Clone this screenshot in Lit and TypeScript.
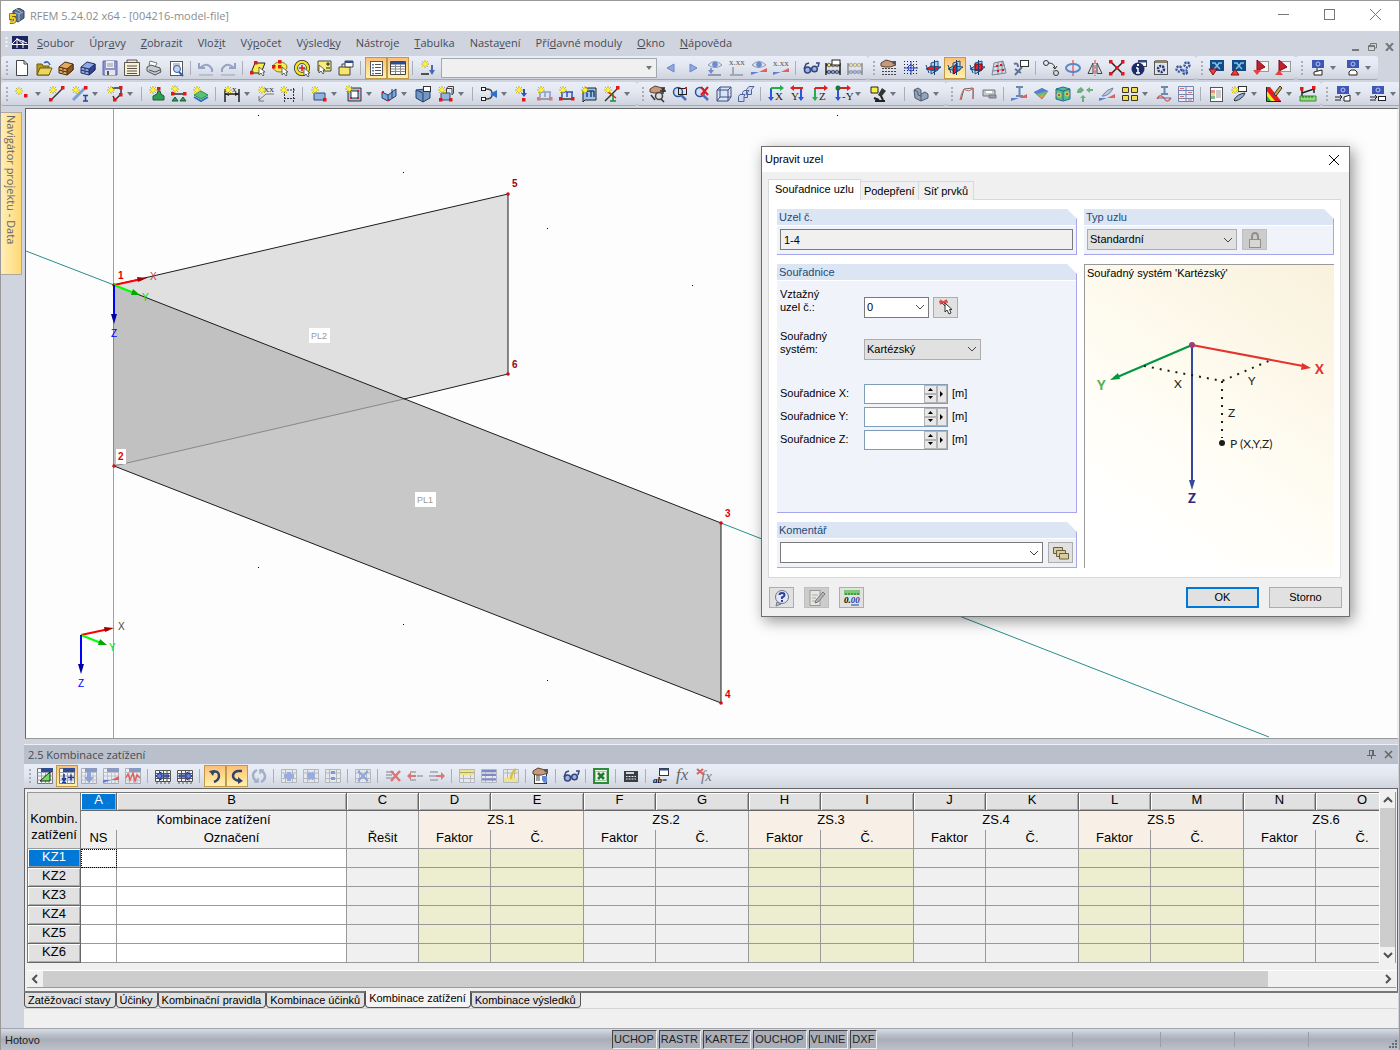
import { LitElement, html, svg, css, nothing } from "lit";
import { customElement, property } from "lit/decorators.js";
import { classMap } from "lit/directives/class-map.js";

/* ---------- shared drawing fragments ---------- */
const star = (x = 4, y = 4) => svg`<g transform="translate(${x} ${y})"><path d="M0-4V4M-4 0H4M-3-3L3 3M3-3L-3 3" stroke="#c9b400" fill="none"/><circle r="2" fill="#fff23c"/></g>`;
const dot = (x: number, y: number, c = "#e01818") => svg`<rect x=${x} y=${y} width="3.500" height="3.500" fill=${c}/>`;
const node = (x: number, y: number) => svg`<rect x=${x} y=${y} width="2" height="2" fill="#e01818"/>`;
const ring = (x: number, y: number, r: number, c: string) => svg`<circle cx=${x} cy=${y} r=${r} fill="none" stroke=${c}/>`;
const line = (d: string, c = "#222", w = 1) => svg`<path d=${d} stroke=${c} stroke-width=${w} fill="none"/>`;
const fill = (d: string, c: string, s = "none") => svg`<path d=${d} fill=${c} stroke=${s}/>`;
const cursor = (x = 8, y = 7) => svg`<path transform="translate(${x} ${y})" d="M0 0V8L2 6L4 9L5 8L4 5H6Z" fill="#fff" stroke="#444" stroke-width=".8"/>`;
const glyph = (t: string, x: number, y: number, s: number, c = "#222") => svg`<text x=${x} y=${y} font-size=${s} fill=${c} font-family="Liberation Serif, serif">${t}</text>`;
const gridBox = (o = 1) => svg`<g opacity=${o}><path d="M.5 .5H15.5V15.5H.5Z" fill="#f4f5f7" stroke="#777"/><path d="M.5 4.500H15.500M.5 8H15.500M.5 12H15.500M4.500 4V15.500M8.500 4V15.500M12 4V15.500" stroke="#9aa0aa" fill="none"/><path d="M4 0H16V4H4Z" fill="#2f4c92"/></g>`;
const plainGrid = () => svg`<path d="M.5 2.500H15.500V13.500H.5ZM4.500 2V14M8.500 2V14M12 2V14M1 5.500H15M1 10.500H15" fill="#f4f5f7" stroke="#555"/><path d="M2 14V16M6 14V16M10 14V16M14 14V16" stroke="#555"/>`;
const paleGrid = () => svg`<path d="M.5 1.500H15.500V14.500H.5ZM4.500 1V15M11.500 1V15M1 5H15M1 10.500H15" fill="#e6e8ec" stroke="#b3b7be"/>`;
const cabinet = (a: string, b: string, c: string) => svg`${fill("M1 7L7 2L15 4V10L9 15L1 13Z", a, c)}${fill("M9 9L15 4V10L9 15Z", b, c)}${line("M1 7L9 9M1 10L9 12M4 9H6M4 12H6", c)}`;
const planes = (f: string) => svg`${fill("M6 3L13 1V10L6 14Z", "#a9d4f0", "#16518d")}${fill("M1 9L6 6L16 7L10 11Z", f === "a" ? "#e02020" : "#7cb8e6", "#16518d")}${f === "c" ? fill("M6 4H13V10H6Z", "#ee1c24", "#8a0000") : nothing}${f === "b" ? fill("M6 8L10 3V11L7 14Z", "#e02020", "#7a0000") : nothing}${line("M9.500 0V15M1 5L4 13", "#173f72")}`;
const lens = (x: number, y: number) => svg`<circle cx=${x} cy=${y} r="4.500" fill="#cfe0fa" stroke="#2d4f9c" stroke-width="1.500"/>${line(`M${x + 3} ${y + 3}L${x + 8} ${y + 8}`, "#4c6fc0", 2.5)}`;
const monitor = () => svg`<rect x="2" y="0" width="12" height="8" fill="#3f57b4"/><circle cx="8" cy="4" r="2" fill="none" stroke="#b9c6f0"/>`;
const screen = () => svg`<rect x="1" y="0" width="14" height="11" fill="#134b86"/>${line("M3 3H6L8 6L10 3H13M8 6L5 9M8 6L11 9", "#7fc3ea", 1.5)}`;
const glasses = () => svg`${line("M1 9L3 4L6 3M15 7L16 3L13 3M7 9Q8 8 9 9", "#34457c", 1.5)}<circle cx="4.500" cy="10" r="3" fill="#9db4e8" stroke="#34457c" stroke-width="1.500"/><circle cx="11.500" cy="9" r="2.800" fill="#9db4e8" stroke="#34457c" stroke-width="1.500"/>`;
const abacus = (c: string) => svg`${line("M1 3V15M15 3V15M1 5H15M1 12H15", c, 1.5)}<g fill="#f3df6c" stroke=${c} stroke-width=".6"><circle cx="4" cy="5" r="1.800"/><circle cx="8" cy="5" r="1.800"/><circle cx="12" cy="5" r="1.800"/></g><g fill="#7f9be0" stroke=${c} stroke-width=".6"><circle cx="4" cy="12" r="1.800"/><circle cx="8" cy="12" r="1.800"/><circle cx="12" cy="12" r="1.800"/></g>`;
const hand = () => svg`${fill("M0 3L5 0L12 2L15 5L9 7L4 7L0 6Z", "#c49a78", "#5c4030")}${fill("M10 1L15 1V5L12 4Z", "#555")}`;
const eye = (y = 0) => svg`<g transform="translate(0 ${y})"><path d="M1 5Q8-2 15 5Q8 10 1 5Z" fill="#dfe7f7" stroke="#8d96ab"/><circle cx="8" cy="4.500" r="2.800" fill="#6c8ccf"/></g>`;
const wedge = () => svg`${fill("M0 15V12L8 12Z", "#5d7fd8")}${fill("M8 12L16 8V12Z", "#e06060")}`;
const axes = (t: string, h: string, v: string, flip = false) => svg`${line(flip ? "M13 2H2M11 2V14" : "M3 2H14M3 2V14", h, 2)}${flip ? fill("M4-1V5L0 2Z", h) : fill("M12-1V5L16 2Z", h)}${line(flip ? "M11 3V12" : "M3 3V12", v, 2)}${flip ? fill("M8 11H14L11 15Z", v) : fill("M0 11H6L3 15Z", v)}${glyph(t, flip ? 1 : 7, 14, 11)}`;
const doc = () => svg`<rect x="2.500" y="1.500" width="12" height="14" fill="#fff" stroke="#555"/>`;
const load = (o: number) => svg`<g opacity=${o}>${line("M1 13H15", "#333", 1.5)}${line("M3 6H14M3 6V11M8 6V11M13 6V11", "#2a55bb", 1.5)}${dot(0, 11)}${dot(12, 11)}</g>${star(4, 4)}`;
const redPlane = (up: boolean) => svg`<rect x="5.500" y="1.500" width="10" height="10" fill="#f4f4f4" stroke="#999"/>${fill("M4 0L12 7L4 11Z", "#c32030", "#7a0c18")}${up ? fill("M0 15H8L4 10Z", "#e84040") : fill("M0 10H8L4 15Z", "#e84040")}`;

const ICONS: Record<string, unknown> = {
  new: svg`${fill("M2.500 .5H10L13.500 4V15.500H2.500Z", "#fff", "#444")}${line("M10 .5V4H13.500", "#444")}`,
  open: svg`${fill("M1 4H6L7 6H13V15H1Z", "#b99a1c", "#6b5a10")}${fill("M1 15L4 8H16L13 15Z", "#ecd65e", "#6b5a10")}${line("M8 3Q12 0 14 5", "#3a62b8", 1.5)}`,
  project: cabinet("#e6a85a", "#8a5a24", "#4a2c10"),
  library: cabinet("#8fa8e6", "#32458c", "#1f2e66"),
  save: svg`${fill("M1 1H15V15H1Z", "#8d93cc", "#666aa6")}<rect x="4" y="1" width="8" height="7" fill="#eee"/>${line("M5 4H11M5 6H11", "#999")}<rect x="3" y="10" width="10" height="5" fill="#e4e6ee"/><rect x="5" y="11" width="2" height="4" fill="#555"/>`,
  header: svg`${fill("M.5 2.500H15.500V15.500H.5Z", "#f7f1dc", "#5d5346")}${line("M3 2V0H13V2M3 6H13M3 8.500H13M3 11H13M3 13.500H13", "#5d5346")}`,
  print: svg`${fill("M4 1L11 3L9 7L3 5Z", "#fff", "#777")}${fill("M1 7L5 5L14 8L15 12L9 15L1 11Z", "#c6cad4", "#555")}${line("M3 10L9 12L14 10", "#555")}`,
  preview: svg`${doc()}${line("M5 4H12M5 6H12M5 8H9", "#888")}<circle cx="9" cy="9" r="3.500" fill="#bdd4f5" stroke="#3a5ca8"/>${line("M11 12L15 16", "#3a5ca8", 2)}`,
  undo: svg`${line("M1 3V8H7M2 8Q9 1 14 9V12", "#93a2c6", 2)}${line("M1 15H15", "#9aa3b5")}`,
  redo: svg`${line("M15 3V8H9M14 8Q7 1 2 9V12", "#93a2c6", 2)}${line("M1 15H15", "#9aa3b5")}`,
  selPoly: svg`${fill("M1 13L5 3H15L11 13Z", "#f7ee4e", "#222")}${dot(4, 1)}${dot(0, 11)}${cursor(9, 7)}`,
  selOval: svg`<ellipse cx="8" cy="7" rx="7" ry="5" fill="#f7ee4e" stroke="#8a7c10"/>${dot(6, 0)}${dot(6, 5)}${dot(0, 5)}${cursor(10, 7)}`,
  selRing: svg`<circle cx="8" cy="8" r="6" fill="none" stroke="#222" stroke-width="4"/><circle cx="8" cy="8" r="6" fill="none" stroke="#f4e61e" stroke-width="2.500"/>${line("M8 5V11M5 8H11", "#e01818", 1.5)}${cursor(10, 8)}`,
  selMore: svg`${fill("M2 1H15V11H2Z", "#f7ee7a", "#444")}${line("M10 4H14M12 2V6M10 8H14", "#222")}${cursor(3, 5)}`,
  selWin: svg`${fill("M1 7H12V15H1Z", "#f7e66a", "#444")}${fill("M7 1H15V7H7Z", "#fff", "#444")}${line("M7 2H15", "#2f4c92", 2)}${line("M4 7V4H7", "#444")}`,
  tree: svg`${doc()}${line("M7 4.500H13M7 7.500H13M7 10.500H13M7 13.500H13", "#555")}<path d="M5 4V15" stroke="#2f4c92" stroke-width="1.500" stroke-dasharray="1.500 1.500"/>`,
  table: svg`${fill("M.5 1.500H15.500V14.500H.5Z", "#fff", "#444")}${line("M1 3H15", "#2f4c92", 3)}${line("M1 6.500H15M1 9H15M1 11.500H15M5.500 4V14M10.500 4V14", "#888")}`,
  newLoad: svg`${star(5, 4)}${line("M1 14H9", "#222", 1.5)}${line("M12 5V11", "#4a68b4", 2)}${fill("M9 10H15L12 15Z", "#4a68b4")}`,
  prev: fill("M11 4V12L4 8Z", "#8ea8e8", "#6f86c4"),
  next: fill("M5 4V12L12 8Z", "#8ea8e8", "#6f86c4"),
  eyeDown: svg`${eye()}${line("M4 8V13M1 15H14", "#7c8698", 1.5)}${fill("M1 10H7L4 14Z", "#6c8ccf")}`,
  xxDown: svg`${glyph("x.xx", 0, 5, 9, "#555")}${line("M4 7V14M1 15H14", "#9098a8", 1.5)}`,
  eyeRed: svg`${eye()}${wedge()}`,
  xxRed: svg`${glyph("x.xx", 0, 6, 9, "#555")}${wedge()}`,
  glasses: glasses(),
  abacusWin: svg`${abacus("#222")}<rect x="7" y="0" width="8" height="5" fill="#fff" stroke="#222"/>`,
  abacus: svg`<g opacity=".6">${abacus("#555")}</g>`,
  handGrid: svg`<path d="M1 8.500H16M1 11.500H16M1 14.500H16" stroke="#444" stroke-dasharray="2 1" fill="none"/>${hand()}`,
  gridPoint: svg`<g fill="none" stroke="#223" stroke-dasharray="1 2"><path d="M1 1.500H15M1 4.500H15M1 7.500H15M1 10.500H15M1 13.500H15"/></g>${ring(8, 8, 3, "#2a44c8")}${line("M8 1V15M1 8H15", "#2a44c8")}`,
  planeA: planes("a"), planeB: planes("b"), planeC: planes("c"),
  meshBox: svg`${fill("M3 3L12 1L15 13L1 15Z", "#d4dbe6", "#7c8698")}${line("M7 2V15M11 1V14M2 7L14 5M2 11L15 9", "#7c8698")}${node(5, 5)}${node(9, 4)}${node(6, 10)}${node(11, 9)}`,
  wrench: svg`${line("M2 15L9 7M2 9L8 13M1 4Q5 2 5 7", "#5f7396", 2)}<rect x="7.500" y=".5" width="8" height="6" fill="#fff" stroke="#333"/>`,
  copyRot: svg`${ring(3, 3, 2.5, "#333")}${ring(13, 13, 2.5, "#333")}${ring(11, 11, 1, "#999")}${line("M6 3Q11 3 12 8M10 7L12 9L14 6", "#333")}`,
  rotate: svg`${line("M8 0V16", "#e03030")}<ellipse cx="8" cy="8" rx="7" ry="4" fill="none" stroke="#5c86c8" stroke-width="2"/>`,
  mirror: svg`<path d="M8 0V16" stroke="#e03030" stroke-dasharray="4 1"/>${line("M6 3V13.500H1ZM10 3V13.500H15Z", "#444")}`,
  scatter: svg`${line("M2 2L14 14M14 2L2 14", "#222", 1.5)}${dot(0, 0)}${dot(12, 0)}${dot(0, 12)}${dot(12, 12)}${dot(6, 6)}`,
  info: svg`<rect x="7.500" y=".5" width="8" height="6" fill="#fff" stroke="#444"/>${line("M7 1.500H16", "#2f4c92", 2)}<circle cx="7" cy="9" r="6.500" fill="#1d2a66"/>${line("M7 8V13M5 8H7M5 13H9", "#fff", 1.5)}<rect x="6" y="4" width="2" height="2" fill="#fff"/>`,
  gearBox: svg`<rect x="1.500" y="1.500" width="13" height="13" fill="#dfe3ec" stroke="#555"/><rect x="2" y="0" width="12" height="3" fill="#8c8272"/><circle cx="8" cy="9" r="3" fill="none" stroke="#22356e" stroke-width="2.500" stroke-dasharray="2 1"/>`,
  gears: svg`<g fill="none" stroke="#34519c" stroke-width="2.400" stroke-dasharray="2 1"><circle cx="4" cy="9" r="2.500"/><circle cx="12" cy="5" r="2.500"/><circle cx="10" cy="12" r="2"/></g>`,
  tableDown: svg`${screen()}${fill("M0 9H8L4 15Z", "#e84040", "#8a1010")}`,
  tableUp: svg`${screen()}${fill("M0 15H8L4 9Z", "#e84040", "#8a1010")}`,
  redDown: redPlane(false), redUp: redPlane(true),
  monA: svg`${monitor()}${fill("M4 12L12 10V15H4Z", "#fff", "#222")}${line("M7 8V11", "#222")}`,
  monB: svg`${monitor()}${fill("M4 15V12L6 10H10L12 12V15Z", "#fff", "#222")}`,
  monC: svg`${monitor()}${line("M0 11H6M0 14H6M5 9L7 11L5 13", "#222")}${fill("M9 11L15 9V15H9Z", "#fff", "#222")}`,
  monD: svg`${monitor()}${line("M0 11H6M0 14H6M5 9L7 11L5 13", "#222")}<rect x="8.500" y="10.500" width="7" height="4" fill="#fff" stroke="#222"/>`,

  node: svg`${star(4, 5)}${dot(9, 8)}`,
  line: svg`${line("M2 14L14 2", "#333", 1.5)}${dot(0, 12)}${dot(12, 0)}${star(4, 4)}`,
  member: svg`${line("M1 14L13 2", "#7ba0d8", 3)}${star(4, 4)}${dot(12, 0)}${line("M11 9.500H16M13.500 10V15M11 15H16", "#2a44a0", 1.5)}`,
  poly: svg`${line("M5 2H14V8L8 14L6 10", "#333", 1.5)}${dot(12, 0)}${dot(12, 7)}${dot(6, 12)}${star(4, 4)}`,
  support: svg`${dot(8, 1)}${fill("M9 5H11L12 8L15 10V14H4V10L8 8Z", "#2f9e54", "#146030")}${star(4, 4)}`,
  lineSupport: svg`${line("M1 8H15", "#333", 1.5)}${dot(0, 6)}${dot(12, 6)}${fill("M4 11L7 15H1ZM12 11L15 15H9Z", "#2f9e54", "#146030")}${star(4, 3)}`,
  surfSupport: svg`${fill("M1 9L8 5L15 9L8 13Z", "#5cc074", "#2a8a55")}${line("M1 11L8 15L15 11", "#2a75bb", 2)}${star(4, 4)}`,
  dim: svg`${line("M1 8H15M1 3V16M15 3V16", "#222", 1.5)}${fill("M1 8L5 6V10ZM15 8L11 6V10Z", "#222")}${glyph("x", 8, 6, 9)}${star(4, 4)}`,
  note: svg`${glyph("XX", 6, 6, 7)}${line("M16 8H8L1 14M1 10V15H6", "#777")}${star(4, 4)}`,
  guide: svg`<path d="M4 4H16M4 12.500H16M4.500 2V16M13.500 2V16" stroke="#333" stroke-dasharray="2 1" fill="none"/>${star(4, 4)}`,
  surface: svg`${fill("M3 7H14V14H3Z", "#8fb4e4", "#2f4c72")}${dot(12, 12)}${star(4, 4)}`,
  opening: svg`${fill("M2 2H15V15H2Z", "#9fc0ea", "#333")}${fill("M5 5H12V12H5Z", "#fff", "#333")}${node(4, 4)}${node(11, 4)}${node(4, 11)}${node(11, 11)}${star(3, 3)}`,
  fold: svg`${fill("M1 6L7 9L15 3V10L7 15L1 12Z", "#7fa6dc", "#22406e")}${line("M7 9V15M11 3V12", "#22406e")}${node(1, 5)}${node(7, 13)}`,
  solid: svg`${fill("M1 4L10 3L15 6V12L8 16L1 12Z", "#7396c4", "#22406e")}${line("M1 4L8 7V16", "#22406e")}<rect x="8.500" y=".5" width="7" height="5" fill="#fff" stroke="#333"/>`,
  solidNew: svg`${fill("M3 7H12V14H3Z", "#8fb4e4", "#2f4c72")}<path d="M8.500 2.500L10 .5H15.500V7L14 9M8.500 7V2.500H14V9" fill="none" stroke="#444"/>${dot(1, 12)}${dot(11, 12)}${star(4, 4)}`,
  branch: svg`${line("M5 3Q11 3 11 7M5 13Q11 13 11 9", "#444", 1.5)}<rect x=".5" y="1.500" width="4" height="3" fill="#fff" stroke="#222"/><rect x=".5" y="11.500" width="4" height="3" fill="#fff" stroke="#222"/>${fill("M16 4V12L9 8Z", "#2f6fd0")}`,
  loadNode: svg`${line("M9 3V9", "#2a55bb", 2)}${fill("M6 7H12L9 11Z", "#2a55bb")}${dot(7, 12)}${star(4, 4)}`,
  loadDim: load(0.5), loadLine: load(1),
  loadSurf: svg`${fill("M4 2H15V14H4L2 16V5Z", "#9fc4e8", "#222")}${line("M6 5V11M10 5V11M13 5V11M6 5H13", "#1f4288", 1.5)}${star(4, 4)}`,
  loadFree: svg`${line("M1 15L14 2", "#333", 1.5)}${line("M4 6L12 12", "#e01818", 1.5)}${line("M9 8V15M6 15H12", "#1f8a3c", 1.5)}${dot(12, 0)}${star(4, 4)}`,
  handZoom: svg`${hand()}<circle cx="9" cy="10" r="3.500" fill="#ddd" stroke="#444" stroke-width="1.500"/>${line("M11 13L14 16M1 9L5 14M13 2V8M10 5H16", "#333", 1.5)}`,
  zoomWin: svg`${lens(6, 6)}<rect x="6.500" y="2.500" width="8" height="6" fill="none" stroke="#222"/>${node(13, 1)}`,
  zoomX: svg`${lens(6, 6)}${line("M7 1L14 9M14 1L7 9", "#e01818", 2)}`,
  cube: svg`${fill("M1 4L4 1H15V11L12 15H1Z", "#dbe3f6", "#3b4e80")}${line("M1 4H12V15M12 4L15 1M4 1V11H15M4 11L1 15", "#3b4e80")}`,
  cubes: svg`<g fill="#cfdaf2" stroke="#50649a"><path d="M8.500 3.500L11 .5H16L13.500 3.500V8.500H8.500ZM4.500 6.500L6 4.500H11L9.500 6.500V11.500H4.500Z"/><path d="M.5 10.500L2 8.500H7L6 10.500V15.500H.5Z"/></g>`,
  axX: axes("X", "#22b04c", "#2a55e0"), axY: axes("Y", "#e02020", "#2a55e0", true), axZ: axes("Z", "#e02020", "#22b04c"), axMY: svg`${axes("-Y", "#e02020", "#2a55e0")}<circle cx="3" cy="2" r="2.500" fill="#147a34"/>`,
  lamp: svg`${fill("M1 1H8V7H1Z", "#f7f03c", "#222")}${fill("M12 2L16 5L11 11L8 9Z", "#333")}${line("M5 15H15M11 10L13 14M4 12L9 14", "#222", 2)}`,
  shape: svg`${fill("M1 4L5 2L8 4V8L12 6L15 8V12L8 15L2 12Z", "#93a4b8", "#4c5a6c")}${line("M8 8V15M1 4L5 6V9L8 10", "#4c5a6c")}`,
  frame: svg`${line("M2 14L5 3L14 2V13", "#5a6a5c")}${line("M1 14Q2 7 5 3Q10 7 14 2Q15 8 14 13", "#d86060")}`,
  tube: svg`${fill("M2 4H14V10H2Z", "#c4c8d0", "#777")}${line("M5 6H11", "#fff", 2)}${fill("M8 9H15V12H8Z", "#9aa0ac", "#777")}`,
  beamRed: svg`${line("M5 1H12M8.500 1V10M5 10H12", "#6a8ab0", 2)}${wedge()}`,
  contour: svg`${fill("M1 6L9 2L15 5L9 13Z", "#62c46a")}${fill("M1 6L9 2L15 5L3 8Z", "#5a78e0")}${fill("M6 10L12 8L9 13Z", "#ee9a3c")}${line("M1 6L9 13L15 5", "#889")}`,
  contourCube: svg`${fill("M1 3L8 1L15 3V13L8 15L1 13Z", "#52c08c", "#2a6a94")}${line("M8 5V15M1 3L8 5L15 3", "#2a6a94")}${ring(4, 9, 2, "#f0d03c")}<circle cx="4" cy="9" r="1" fill="#e03030"/>${ring(12, 8, 2, "#f0d03c")}<circle cx="12" cy="8" r="1" fill="#e03030"/>`,
  reactions: svg`<g opacity=".85">${fill("M4 2V5H0V7H4V5H7L4 2ZM5 16V12H3L6 9L9 12H7V16Z", "#56a868")}${fill("M9 4L13 1V3H16V5H13V7Z", "#56a868")}${fill("M0 4L4 1L7 4L4 7Z", "#56a868")}</g>`,
  blade: svg`${fill("M3 10Q8 3 14 2Q12 8 5 10Z", "#b8c6de", "#73819c")}${wedge()}`,
  boxes: svg`<g fill="#f1dc52" stroke="#3c3620"><path d="M.5 1.500H6.500V6.500H.5ZM9.500 1.500H15.500V6.500H9.500ZM.5 9.500H6.500V14.500H.5ZM9.500 9.500H15.500V14.500H9.500Z"/></g>`,
  wave: svg`${line("M5 1H12M8.500 1V8M5 8H12", "#6a8ab0", 2)}${line("M1 13Q4 7 8 12Q11 18 15 12", "#e06060", 1.5)}${line("M1 12H15", "#556bb0")}`,
  resultTable: svg`<path d="M.5 .5H15.500V15.500H.5ZM8 0V16M0 4.500H16M0 8.500H16M0 12.500H16" fill="#e8ecf6" stroke="#7786b0"/>${line("M2 2.500H6M10 6.500H14M2 10.500H6M10 14H14", "#e07070")}`,
  report: svg`${doc()}<rect x="3" y="4" width="4" height="3" fill="#e89090"/><rect x="3" y="7" width="4" height="3" fill="#e8e090"/><rect x="3" y="10" width="4" height="3" fill="#80c090"/>${line("M8 5H13M8 7H13M8 9H13M8 11H13", "#999")}`,
  newBlade: svg`<rect x="7.500" y=".5" width="8" height="5" fill="#fff" stroke="#333"/>${fill("M3 14Q6 8 14 7Q12 13 4 15Z", "#8fb0dc", "#333")}${star(4, 4)}`,
  rainbow: svg`${fill("M0 1H4L15 15H0Z", "#e02020")}${fill("M0 4L9 15H0Z", "#f6e71e")}${fill("M0 9L5 15H0Z", "#22a84a")}${fill("M8 8L14 0L16 2L10 10Z", "#d8a840", "#333")}${line("M.5 1V15.500H15", "#222")}`,
  ruler: svg`${line("M2 7L14 3M2 4V10M14 1V7", "#222", 1.500)}${dot(0, 1)}${dot(12, 0)}${fill("M0 10H16V15H0Z", "#8fdc7c", "#3c8a30")}${line("M3 10V12M6 10V12M9 10V12M12 10V12", "#226018")}`,

  gTri: svg`${gridBox()}${fill("M3 13L13 4V13Z", "#6fe05a", "#222")}`,
  gPlus: svg`${gridBox()}${line("M5 6V13M3 10L5 13L7 10M3 14.500H7M9 9.500H15M12 6.500V12.500", "#1f3a9a", 1.500)}`,
  gDown: svg`${gridBox(0.5)}${fill("M6 4H10V9H13L8 15L3 9H6Z", "#8ea4d8")}`,
  gRed: svg`${gridBox(0.5)}${wedge()}`,
  gWave: svg`${gridBox(0.5)}${line("M1 10L3 6L5 12L8 5L10 13L12 7L15 10", "#e06060", 1.500)}`,
  gLeft: svg`${plainGrid()}${fill("M1 8L6 4V7H14V9H6V12Z", "#5f7ee8", "#1c2c78")}`,
  gRight: svg`${plainGrid()}${fill("M15 8L10 4V7H2V9H10V12Z", "#5f7ee8", "#1c2c78")}`,
  curlA: svg`${line("M5 4Q12 2 12 8Q12 12 7 14", "#34436e", 2.5)}${fill("M2 3L8 2L6 8Z", "#34436e")}`,
  curlB: svg`${line("M13 3H9Q4 4 4 8Q4 12 11 13", "#34436e", 2.5)}${fill("M9 9L14 13L9 16Z", "#34436e")}`,
  cycle: svg`${line("M6 2Q0 5 3 11L7 14M10 14Q16 11 13 5L9 2", "#a3afc8", 2.5)}${line("M7 10V14H3M9 6V2H13", "#a3afc8", 1.500)}`,
  cPlus: svg`${paleGrid()}${fill("M6 4H10V6H13V10H10V13H6V10H3V6H6Z", "#98acdf")}`,
  cTimes: svg`${paleGrid()}${line("M5 5L11 11M11 5L5 11", "#98acdf", 4)}`,
  cColon: svg`${paleGrid()}${line("M8 3V6M8 9V12", "#7f98dc", 4)}`,
  cClear: svg`${paleGrid()}${line("M3 3L13 13M13 3L3 13", "#8ea4dc", 2)}`,
  rowDel: svg`${line("M1 4H9M1 7H7M1 10H9", "#b0b3bb", 2)}${line("M6 3L15 13M15 3L6 13", "#d87878", 2.500)}`,
  rowIn: svg`${line("M3 4H9M10 8H16M3 12H9", "#b0b3bb", 2)}${line("M3 8H9", "#d87878", 2)}${fill("M4 4V12L0 8Z", "#d87878")}`,
  rowOut: svg`${line("M1 4H9M0 8H7M1 12H9", "#b0b3bb", 2)}${line("M7 8H13", "#d87878", 2)}${fill("M12 4V12L16 8Z", "#d87878")}`,
  tblY: svg`${paleGrid()}<rect x="1" y="2" width="14" height="5" fill="#ece48e"/>${line("M1 4.500H15", "#b0a860")}`,
  tblB: svg`${paleGrid()}${line("M1 3H15M1 7H15M1 11.500H15", "#8088cc", 2)}`,
  tblE: svg`${paleGrid()}<rect x="1" y="10" width="14" height="4" fill="#ece48e"/>${line("M13 1Q8 5 8 11", "#d8c040", 2.500)}`,
  handTable: svg`<rect x="1.500" y="4.500" width="12" height="11" fill="#fff" stroke="#333"/>${line("M3 8H7M3 10H7M3 12H7", "#444")}${hand()}${fill("M9 8L14 8V14L11 15L9 12Z", "#5f86d8")}`,
  glasses2: glasses(),
  excel: svg`<rect x="1" y="1" width="14" height="14" fill="#eef6ee" stroke="#2f8a3c" stroke-width="2"/><rect x="2.500" y="3.500" width="11" height="9" fill="none" stroke="#9cc8a0"/>${line("M5 5L11 11M11 5L5 11", "#1f7a30", 2.500)}`,
  calc: svg`<rect x="1" y="3" width="14" height="11" fill="#3a3d44"/><rect x="3" y="4" width="8" height="2" fill="#cfd6e0"/>${line("M3 8.500H13M3 11H13", "#e8eaee")}<path d="M5 7V12M8 7V12M11 7V12" stroke="#3a3d44"/>`,
  ab: svg`<rect x="6.500" y=".5" width="9" height="7" fill="#fff" stroke="#333"/>${line("M6 1.500H16", "#2f4c92", 2)}<text x="0" y="15" font-size="9" font-style="italic" font-weight="700" font-family="Liberation Serif, serif">ab=</text>`,
  fx: svg`<text x="1" y="12" font-size="17" font-style="italic" fill="#666" font-family="Liberation Serif, serif">fx</text>`,
  fxx: svg`<text x="4" y="13" font-size="15" font-style="italic" fill="#777" font-family="Liberation Serif, serif">fx</text>${line("M0 1L6 6M6 1L0 6", "#dc6060", 2)}`,

  pick: svg`${line("M2 1L8 5M9 1L2 5M1 3H10", "#d84848", 1.500)}${line("M4 4L9 9", "#444")}<path transform="translate(7 4)" d="M0 0V9L2 7L4 11L6 10L4.500 6.500H7Z" fill="#fff" stroke="#333"/>`,
  lock: svg`<path d="M5 8V5Q5 1 8 1Q11 1 11 5V8" fill="none" stroke="#8f8f8f" stroke-width="2"/><rect x="2.500" y="7.500" width="11" height="8" fill="#d8d8d2" stroke="#8f8f8f"/>`,
  folders: svg`<g fill="#d8cda0" stroke="#6a6040"><path d="M.5 2.500H9.500V8.500H.5Z"/><path d="M3.500 5.500H12.500V11.500H3.500Z"/><path d="M6.500 8.500H15.500V14H6.500Z"/></g>`,
  help: svg`<circle cx="8" cy="7" r="6.500" fill="#e3e8f4" stroke="#6c7488"/>${fill("M3 12L2 16L7 14Z", "#c4cad8", "#6c7488")}<path d="M5.500 5Q5.500 3 8 3Q10.500 3 10.500 5Q10.500 6.500 8 7.500V9" fill="none" stroke="#2a3f9c" stroke-width="2"/><rect x="7" y="10" width="2" height="2" fill="#2a3f9c"/>`,
  edit: svg`<rect x="1" y=".5" width="10" height="15" fill="#e6e6e2" stroke="#999"/>${line("M3 5H9M3 8H7M3 11H6", "#aaa")}${fill("M14 2L16 4L9 12L6 13L7 10Z", "#b4b8b4", "#777")}`,
  units: svg`<rect x="0" y="0" width="16" height="5" fill="#7cc878"/>${line("M2 3V5M5 3V5M8 3V5M11 3V5M14 3V5", "#226018")}${line("M7 15H15", "#2a3fa8")}<text x="0" y="13" font-size="9" font-style="italic" font-weight="700" font-family="Liberation Serif, serif">0.<tspan fill="#2a3fa8">00</tspan></text>`,
};

@customElement("ui-icon")
class UiIcon extends LitElement {
  @property() name = "";
  static styles = css`:host{display:block;width:16px;height:16px}.pic{display:block;overflow:visible}`;
  render() { return html`<svg class="pic" width="16" height="16" viewBox="0 0 16 16" aria-hidden="true">${ICONS[this.name]}</svg>`; }
}

/* Item syntax: "name" button, "name*" pressed, "name+" with drop-down, "|" separator, "[]" combo box */
@customElement("tool-group")
class ToolGroup extends LitElement {
  @property() items = "";
  static styles = css`
    :host{display:flex;align-items:center;height:24px;padding-right:2px;border-bottom:1px solid #a3a8b4;border-radius:3px;background:linear-gradient(#eaeef8,#e3e7f0 45%,#cfd4de)}
    .grip{width:2px;height:14px;margin:0 3px 0 5px;background:repeating-linear-gradient(#a9aeba 0 2px,transparent 2px 4px)}
    .btn{display:flex;align-items:center;justify-content:center;width:22px;height:22px;padding:0;border:1px solid transparent;background:none;flex:none}
    .btn.on{border-color:#c09a4a;background:linear-gradient(#fbc078,#ffdb8c 50%,#fff0b0)}
    .btn.dd{width:35px;justify-content:flex-start;gap:4px;padding-left:3px}
    .arrow{border:3px solid transparent;border-top:4px solid #70757f;border-bottom:0}
    .sep{width:1px;height:14px;margin:0 4px 0 3px;background:#a9aeb9}
    .combo{width:216px;height:20px;margin:0 3px 0 2px;border:1px solid #a4a8b0;background:#f0f0f0;appearance:none;border-radius:0}
    .cwrap{display:grid;align-items:center;justify-items:end}
    .cwrap>*{grid-area:1/1}
    .cwrap .arrow{margin-right:8px;pointer-events:none}
  `;
  render() {
    return html`<span class="grip"></span>${this.items.split(" ").map((it) => {
      if (it === "|") return html`<span class="sep"></span>`;
      if (it === "[]") return html`<span class="cwrap"><select class="combo" aria-label="Zatěžovací stav"></select><span class="arrow"></span></span>`;
      const dd = it.endsWith("+"), on = it.endsWith("*"), name = it.replace(/[+*]$/, "");
      return html`<button class=${classMap({ btn: true, dd, on })} aria-label=${name}><ui-icon name=${name}></ui-icon>${dd ? html`<span class="arrow"></span>` : nothing}</button>`;
    })}`;
  }
}

@customElement("model-view")
class ModelView extends LitElement {
  static styles = css`
    :host{display:block;overflow:hidden;background:#fdfdfd}
    .scene{display:block;width:100%;height:100%;position:absolute;inset:0;font-family:"Liberation Sans",sans-serif}
    .tag{font-size:9px;fill:#999}.no{font-size:10px;font-weight:700;fill:#e00000}.far{fill:#a00010}.ax{font-size:10px}
  `;
  axis(x: number, y: number) {
    return svg`<g transform="translate(${x} ${y})">
      <path d="M0 0L28-6" stroke="#f00" stroke-width="2"/><path d="M23-8L33-7L24-3Z" fill="#a00000"/>
      <path d="M0 0L20 8" stroke="#0f0" stroke-width="2"/><path d="M19 4L26 10L17 10Z" fill="#00a800"/>
      <path d="M0 0V30" stroke="#00f" stroke-width="2"/><path d="M-3 29H3L0 39Z" fill="#0000a0"/>
      <text class="ax" x="28" y="16" fill="#0d0">Y</text><text class="ax" x="-3" y="52" fill="#00f">Z</text></g>`;
  }
  render() {
    const dots = [[377, 63], [521, 119], [666, 176], [232, 6], [811, 6], [232, 458], [377, 515], [521, 571]];
    const nodes = [[88, 176], [482, 85], [482, 265], [88, 357], [695, 414], [695, 594]];
    return html`<svg class="scene" aria-label="Model">
      <path d="M0 142L88 176M695 414L1243 628" stroke="#2a8c8c" fill="none"/>
      <path d="M87.500 0V629" stroke="#8fa8a8" fill="none"/>
      <path d="M88 176L482 85V265L88 357Z" fill="#e0e0e0"/>
      <path d="M88 176L695 414V594L88 357Z" fill="#c8c8c8"/>
      <path d="M88 176L378 290L88 357Z" fill="#c1c1c1"/>
      <path d="M88 357L378 290M87.500 176V357" stroke="#888" fill="none"/>
      <path d="M378 290L482 265V85L88 176L695 414V594L88 357" stroke="#1c1c1c" fill="none"/>
      ${dots.map(([x, y]) => svg`<rect x=${x} y=${y} width="1" height="1" fill="#000"/>`)}
      ${nodes.map(([x, y]) => svg`<circle cx=${x} cy=${y} r="1.800" fill="#d01010"/>`)}
      <rect x="283" y="219" width="21" height="15" fill="#fff"/><text class="tag" x="285" y="230">PL2</text>
      <rect x="389" y="383" width="21" height="15" fill="#fff"/><text class="tag" x="391" y="394">PL1</text>
      <rect x="90" y="340" width="10" height="15" fill="#fff"/>
      <text class="no" x="92" y="170">1</text><text class="no" x="92" y="351">2</text>
      <text class="no" x="699" y="408">3</text><text class="no" x="699" y="589">4</text>
      <text class="no far" x="486" y="78">5</text><text class="no far" x="486" y="259">6</text>
      ${this.axis(88, 176)}<text class="ax" x="124" y="171" fill="#c04040">X</text>
      ${this.axis(55, 526)}<text class="ax" x="92" y="521" fill="#444">X</text>
    </svg>`;
  }
}

@customElement("node-dialog")
class NodeDialog extends LitElement {
  static styles = css`
    :host{display:block;width:589px;border:1px solid #6e6e6e;background:#f0f0f0;box-shadow:3px 4px 14px rgba(0,0,0,.42);font:11px/13px "Liberation Sans",Arial,sans-serif;color:#000}
    *{box-sizing:border-box}
    button,input,select{font:inherit;color:inherit;border-radius:0;margin:0}
    .title{display:flex;justify-content:space-between;align-items:center;height:25px;padding:0 9px 0 3px;background:#fff}
    .close{display:flex;width:12px;height:12px;padding:0;border:0;background:none}
    .tabs{display:flex;align-items:flex-end;height:28px;margin:0 6px -1px;position:relative}
    .tab{height:19px;padding:0 3px;border:1px solid #d9d9d9;border-left:0;border-bottom:0;background:#f0f0f0}
    .tab.on{height:21px;padding:0 6px 2px;border-left:1px solid #d9d9d9;background:#fff}
    .tab.wide{padding:0 5px}
    .page{display:grid;grid-template-columns:300px 1fr;column-gap:7px;margin:0 8px 0 6px;padding:9px 6px 9px 8px;border:1px solid #d9d9d9;background:#fff}
    .left{display:flex;flex-direction:column;gap:9px}
    .right{display:flex;flex-direction:column;gap:9px}
    .box{margin:0;padding:0;border:0;border-right:1px solid #a6a6ea;border-bottom:1px solid #a6a6ea;background:#f0f3fa;clip-path:polygon(0 0,calc(100% - 10px) 0,100% 10px,100% 100%,0 100%)}
    .head{height:17px;padding:2px;background:#dce5f4;border-bottom:1px solid #fff;color:#1d4a77}
    .body{display:flex;padding:3px 3px 4px;gap:5px}
    .ro{width:100%;height:21px;padding:0 3px;border:1px solid #7a7a7a;background:#f0f0f0}
    .drop{display:grid;align-items:center;justify-items:end}
    .drop>*{grid-area:1/1}
    .drop svg{margin-right:4px;pointer-events:none}
    .sel{width:100%;height:21px;padding:0 2px;border:1px solid #adadad;background:#e1e1e1;appearance:none}
    .sel.edit{border-color:#7a7a7a;background:#fff}
    .sq{display:flex;align-items:center;justify-content:center;flex:none;width:25px;height:21px;padding:0;border:1px solid #adadad;background:#e1e1e1}
    .sq.off{background:#ccc;border-color:#bfbfbf}
    .w150{width:150px}.grow{flex:1}
    .coords{display:flex;flex-direction:column;height:231px;padding:7px 3px}
    .row{display:grid;grid-template-columns:80px auto auto 1fr;align-items:center;column-gap:4px}
    .row.two{height:42px;padding-bottom:4px}
    .row.num{height:23px}
    .num1{margin-top:10px}
    .two .lab{align-self:start}
    .w65{width:65px}.w117{width:117px}
    .spin{display:flex;width:84px;height:20px;border:1px solid #7f9db9;background:#fff}
    .val{flex:1;min-width:0;border:0;padding:0 2px;background:none}
    .ud{display:grid;grid-template-rows:1fr 1fr;width:13px}
    .mini{display:flex;align-items:center;justify-content:center;min-width:0;padding:0;border:1px solid #b4b4b4;background:#e8e8e8}
    .side{width:10px}
    .pic{flex:1;border-left:1px solid #999;border-top:1px solid #999;background:linear-gradient(35deg,#fff 15%,#fffdf4 45%,#f9f1dc 100%);display:flex;flex-direction:column;padding:2px}
    .draw{display:block;overflow:visible}
    .draw text{font-family:Lato,sans-serif;font-size:12px;fill:#222}
    .draw .b{font-weight:900;font-size:13px}
    .foot{display:flex;gap:10px;padding:9px 7px 8px}
    .sp{flex:1}
    .push{width:73px;height:21px;padding:0;border:1px solid #adadad;background:#e1e1e1}
    .push.ok{border:2px solid #0078d7}
  `;
  chev() { return html`<svg width="10" height="6" viewBox="0 0 10 6" aria-hidden="true"><path d="M1 1L5 5L9 1" fill="none" stroke="#444"/></svg>`; }
  num(axis: string) {
    return html`<div class="row num"><label for="c${axis}">Souřadnice ${axis}:</label>
      <span class="spin"><input class="val" id="c${axis}"><span class="ud">
        <button class="mini" aria-label="Zvýšit"><svg width="7" height="4"><path d="M1 4H6L3.500 1Z"/></svg></button>
        <button class="mini" aria-label="Snížit"><svg width="7" height="4"><path d="M1 0H6L3.500 3Z"/></svg></button></span>
        <button class="mini side" aria-label="Další"><svg width="4" height="6"><path d="M0 0L3 3L0 6Z"/></svg></button></span><span>[m]</span></div>`;
  }
  render() {
    return html`
      <div class="title"><span>Upravit uzel</span><button class="close" aria-label="Zavřít"><svg width="12" height="12"><path d="M1 1L11 11M11 1L1 11" stroke="#000" fill="none"/></svg></button></div>
      <div class="tabs"><button class="tab on">Souřadnice uzlu</button><button class="tab">Podepření</button><button class="tab wide">Síť prvků</button></div>
      <div class="page">
        <div class="left">
          <section class="box"><div class="head"><label for="no">Uzel č.</label></div><div class="body"><input class="ro" id="no" value="1-4" readonly></div></section>
          <section class="box"><div class="head">Souřadnice</div><div class="coords">
            <div class="row two"><label class="lab" for="ref">Vztažný<br>uzel č.:</label><span class="drop w65"><select class="sel edit" id="ref"><option>0</option></select>${this.chev()}</span><button class="sq" aria-label="Vybrat uzel"><ui-icon name="pick"></ui-icon></button></div>
            <div class="row two"><label class="lab" for="sys">Souřadný<br>systém:</label><span class="drop w117"><select class="sel" id="sys"><option>Kartézský</option></select>${this.chev()}</span></div>
            <div class="num1">${["X", "Y", "Z"].map((a) => this.num(a))}</div>
          </div></section>
          <section class="box"><div class="head"><label for="com">Komentář</label></div><div class="body"><span class="drop grow"><select class="sel edit" id="com"></select>${this.chev()}</span><button class="sq" aria-label="Komentáře"><ui-icon name="folders"></ui-icon></button></div></section>
        </div>
        <div class="right">
          <section class="box"><div class="head"><label for="typ">Typ uzlu</label></div><div class="body"><span class="drop w150"><select class="sel" id="typ"><option>Standardní</option></select>${this.chev()}</span><button class="sq off" aria-label="Zamknout"><ui-icon name="lock"></ui-icon></button></div></section>
          <div class="pic"><span>Souřadný systém 'Kartézský'</span>
            <svg class="draw" width="240" height="240" aria-label="Kartézský systém">
              <path d="M105 65V202" stroke="#34499a" stroke-width="2"/><path d="M102 200H108L105 210Z" fill="#34499a"/>
              <path d="M105 65L28 98" stroke="#009640" stroke-width="2"/><path d="M23 100L31 93L33 99Z" fill="#009640"/>
              <path d="M105 65L216 86" stroke="#e2342d" stroke-width="2"/><path d="M224 88L215 83L214 90Z" fill="#e2342d"/>
              <path d="M57 86L135 101L184 80M135 101V158" fill="none" stroke="#1d1d1b" stroke-width="2" stroke-dasharray="2 6"/>
              <circle cx="105" cy="65" r="3" fill="#9a3f7a"/><circle cx="135" cy="163" r="3" fill="#1d1d1b"/>
              <text x="87" y="108">X</text><text x="161" y="105">Y</text><text x="141" y="137">Z</text><text x="143" y="168">P (X,Y,Z)</text>
              <text class="b" x="228" y="94" style="fill:#e2342d">X</text><text class="b" x="10" y="110" style="fill:#4fb04f">Y</text><text class="b" x="101" y="223" style="fill:#312783">Z</text>
            </svg></div>
        </div>
      </div>
      <div class="foot"><button class="sq" aria-label="Nápověda"><ui-icon name="help"></ui-icon></button><button class="sq off" aria-label="Upravit"><ui-icon name="edit"></ui-icon></button><button class="sq" aria-label="Jednotky"><ui-icon name="units"></ui-icon></button><span class="sp"></span><button class="push ok">OK</button><button class="push">Storno</button></div>`;
  }
}

@customElement("load-table")
class LoadTable extends LitElement {
  static styles = css`
    :host{display:block;overflow:hidden;font:13px/15px "Liberation Sans",Arial,sans-serif;color:#000}
    .grid{table-layout:fixed;width:1382px;border-collapse:separate;border-spacing:0}
    .r{width:54px}.a{width:36px}.b{width:230px}.n{width:72px}.w{width:93px}
    th,td{box-sizing:border-box;height:19px;padding:0 0 3px;font-weight:400;text-align:center;border-right:1px solid #999;border-bottom:1px solid #999;background:#f0f0f0;white-space:nowrap;overflow:hidden}
    .col{background:#e1e1e1;border-right:1px solid #666;border-bottom:1px solid #666;border-top:1px solid #777;box-shadow:inset 1px 1px #fff,inset -1px -1px #aaa;line-height:14px}
    .on,.row.on{background:#0078d7;color:#fff}
    .corner{background:#e1e1e1;border-left:1px solid #999;border-top:1px solid #999;line-height:16px;padding:12px 0 0;border-right-color:#777}
    .top{border-bottom:0}
    .row{background:#e1e1e1;border-left:1px solid #777;border-right:1px solid #666;border-bottom-color:#666;box-shadow:inset 1px 1px #fff,inset -1px -1px #aaa}
    .row.on{box-shadow:inset 1px 1px #fff,inset -1px -1px #999}
    .pink{background:#f8efe6}.olive{background:#ededcf}.white{background:#fff}
    .cur{outline:1px dotted #000;outline-offset:-1px}
  `;
  render() {
    const groups = [1, 2, 3, 4, 5, 6];
    return html`<table class="grid">
      <colgroup><col class="r"><col class="a"><col class="b"><col class="n">${groups.map(() => html`<col class="n"><col class="w">`)}</colgroup>
      <tr><th class="corner" rowspan="3">Kombin.<br>zatížení</th>${"ABCDEFGHIJKLMNO".split("").map((c, i) => html`<th class=${classMap({ col: true, on: i === 0 })}>${c}</th>`)}</tr>
      <tr><th class="top" colspan="2">Kombinace zatížení</th><th class="top"></th>${groups.map((g) => html`<th colspan="2" class=${classMap({ top: true, pink: g % 2 === 1 })}>ZS.${g}</th>`)}</tr>
      <tr><th>NS</th><th>Označení</th><th>Řešit</th>${groups.map((g) => html`<th class=${classMap({ pink: g % 2 === 1 })}>Faktor</th><th class=${classMap({ pink: g % 2 === 1 })}>Č.</th>`)}</tr>
      ${groups.map((n) => html`<tr><th class=${classMap({ row: true, on: n === 1 })}>KZ${n}</th><td class=${classMap({ white: true, cur: n === 1 })}></td><td class="white"></td><td></td>${groups.map((g) => html`<td class=${classMap({ olive: g % 2 === 1 })}></td><td class=${classMap({ olive: g % 2 === 1 })}></td>`)}</tr>`)}
    </table>`;
  }
}

@customElement("app-root")
class AppRoot extends LitElement {
  static styles = css`
    :host{display:flex;flex-direction:column;min-height:100vh;box-sizing:border-box;border:1px solid #999;border-bottom:0;background:#d0d4de;font:11px/14px "Open Sans","Noto Sans",sans-serif;color:#454b5a;overflow:hidden}
    *{box-sizing:border-box}
    button{font:inherit;color:inherit;padding:0;border:0;background:none}
    .title{display:flex;align-items:center;gap:5px;height:30px;padding:0 18px 0 8px;background:#fff;color:#8c8c8c}
    .sp{flex:1}
    .wc{display:flex;gap:35px}
    .menu{display:flex;align-items:center;gap:15px;height:24px;padding:0 5px 0 4px}
    .menu .mi{color:#454b5a;text-decoration:none}
    .brand{display:flex;align-items:center;gap:3px;margin-right:-6px}
    .mc{display:flex;gap:8px;align-self:flex-end;padding-bottom:4px}
    .bar{display:flex;height:26px;padding-top:1px;overflow:hidden}
    .gfill{flex:1}
    .main{display:flex;flex:1;min-height:630px;padding-top:1px}
    .nav{width:24px;flex:none;padding-top:4px}
    .navtab{display:flex;width:21px;height:163px;padding-top:2px;border:1px solid #aaa9a4;border-left:0;background:linear-gradient(90deg,#ffeeb8,#ffd877);writing-mode:vertical-rl;color:#666;align-items:center}
    .stage{flex:1;position:relative;border:1px solid #666;border-right:2px solid #eee;border-bottom:1px solid #999;min-width:0}
    model-view{position:absolute;inset:0}
    node-dialog{position:absolute;left:735px;top:37px}
    .dock{margin:5px 1px 0 23px;border-top:1px solid #eef0f6;background:#f0f0f0}
    .dhead{display:flex;align-items:center;gap:8px;height:19px;padding:0 5px 0 4px;background:#b9c0cb;color:#444a56}
    .dock tool-group{border:0;border-radius:0;padding-left:0}
    .sheet{border:1px solid #666;border-bottom:0;padding:3px 1px 3px 2px;background:#f0f0f0}
    .tblrow{display:flex}
    load-table{flex:1;min-width:0}
    .vs{display:flex;flex-direction:column;align-items:center;justify-content:space-between;width:17px;border-left:1px solid #fff;border-right:1px solid #999;background:#f0f0f0}
    .vthumb{width:15px;flex:1;background:#cdcdcd}
    .sb{display:flex;align-items:center;justify-content:center;width:16px;height:16px}
    .hs{display:flex;height:18px;margin-top:7px;border-top:1px solid #fff;border-bottom:1px solid #999}
    .hthumb{width:1225px;background:#cdcdcd;flex-shrink:1}
    .tabs{display:flex;height:17px;border-top:2px solid #777;font:11px/13px "Liberation Sans",Arial,sans-serif;color:#000}
    .st{height:15px;padding:0 4px 0 3px;border:1px solid #555;border-top:0;border-radius:0 0 4px 4px;background:#e1e1e1;color:#000}
    .st.on{height:17px;margin-top:-2px;background:#f4f4f4;padding-bottom:2px}
    .below{height:20px;border-top:1px solid #d4d4d4;margin:0 1px 0 0;background:#f0f0f0}
    .status{display:flex;align-items:center;height:22px;border-top:1px solid #a0a5b0;background:linear-gradient(#d9dde4,#b9bec8 30%,#a9aeb8 50%,#bcc1cb);font:11px/14px "Liberation Sans",Arial,sans-serif;color:#222;padding-left:4px}
    .hot{width:607px}
    .flag{height:19px;margin-right:2px;padding:0 2px 1px 1px;border:1px solid #444;border-right-color:#eee;border-bottom-color:#eee;background:#a9aeb8;color:#222}
    .cells{display:flex;align-self:stretch;gap:73px;padding:3px 0;margin-right:78px}
    .cell{width:1px;background:#999fa9}
    .cell.first{margin-right:14px}
    .rs{align-self:flex-end}
  `;
  menuItem(t: string) {
    const [a, b, c] = t.split("_");
    return html`<a class="mi" href="#">${a}<u>${b}</u>${c}</a>`;
  }
  arrow(d: string) { return html`<svg width="10" height="10" viewBox="0 0 10 10"><path d=${d} fill="none" stroke="#505050" stroke-width="2"/></svg>`; }
  render() {
    const menus = ["_S_oubor", "Úpr_a_vy", "_Z_obrazit", "Vlož_i_t", "Vý_p_očet", "Výsled_k_y", "Nástro_j_e", "_T_abulka", "Nasta_v_ení", "Pří_d_avné moduly", "_O_kno", "_N_ápověda"];
    const tabs = ["Zatěžovací stavy", "Účinky", "Kombinační pravidla", "Kombinace účinků", "Kombinace zatížení", "Kombinace výsledků"];
    return html`
      <div class="title">
        <svg width="16" height="16" viewBox="0 0 16 16"><path d="M4 3L10 0L15 3V10L9 14L4 11Z" fill="#5a6f8e" stroke="#2f4058"/><path d="M6 4L10 6V13M10 6L14 4M7 1L12 4" fill="none" stroke="#a8bad4"/><path d="M7 7H2V10Q6 9 6 12Q6 15 1 14" fill="none" stroke="#6a5200" stroke-width="3.500"/><path d="M7 7H2V10Q6 9 6 12Q6 15 1 14" fill="none" stroke="#f4cf2a" stroke-width="2"/></svg>
        <span>RFEM 5.24.02 x64 - [004216-model-file]</span><span class="sp"></span>
        <span class="wc">
          <button aria-label="Minimalizovat"><svg width="11" height="11"><path d="M0 5.500H11" stroke="#777"/></svg></button>
          <button aria-label="Maximalizovat"><svg width="11" height="11"><rect x=".5" y=".5" width="10" height="10" fill="none" stroke="#777"/></svg></button>
          <button aria-label="Zavřít"><svg width="11" height="11"><path d="M0 0L11 11M11 0L0 11" stroke="#777"/></svg></button></span>
      </div>
      <nav class="menu"><span class="brand"><svg width="23" height="14"><path d="M1.500 1V13" stroke="#f4f5f8" stroke-width="2" stroke-dasharray="2 2"/><rect x="7" y="0" width="16" height="13" fill="#1d2560"/><path d="M7 8.500H23M12 2V12M7 8L12 3L18 8M18 4V12M12 3L22 7" stroke="#fff" fill="none"/></svg></span>
        ${menus.map((m) => this.menuItem(m))}<span class="sp"></span>
        <span class="mc"><svg width="8" height="8"><path d="M0 7H7" stroke="#777" stroke-width="2"/></svg><svg width="9" height="8"><path d="M2.500 2V.5H8.500V5H7M.5 2.500H6.500V7.500H.5ZM.5 3.500H6.500" fill="none" stroke="#777"/></svg><svg width="9" height="8"><path d="M1 0L8 8M8 0L1 8" stroke="#777" stroke-width="2"/></svg></span></nav>
      <div class="bar">
        <tool-group items="new open project library save header print preview | undo redo | selPoly selOval selRing selMore selWin | tree* table* | newLoad [] prev next eyeDown xxDown eyeRed xxRed | glasses abacusWin abacus"></tool-group>
        <tool-group items="handGrid gridPoint planeA planeB* planeC meshBox wrench | copyRot rotate mirror scatter info gearBox gears"></tool-group>
        <tool-group items="tableDown tableUp redDown redUp"></tool-group>
        <tool-group items="monA+ monB+"></tool-group>
      </div>
      <div class="bar">
        <tool-group items="node+ line member+ poly+ | support lineSupport surfSupport | dim+ note guide | surface+ opening+ fold+ solid solidNew+ | branch+ loadNode loadDim loadLine loadSurf loadFree+"></tool-group>
        <tool-group items="handZoom zoomWin zoomX cube cubes | axX axY axZ axMY+ lamp+ | shape+"></tool-group>
        <tool-group items="frame tube | beamRed contour contourCube reactions blade boxes+ wave resultTable | report newBlade+ rainbow+ ruler"></tool-group>
        <tool-group class="gfill" items="monC+ monD+"></tool-group>
      </div>
      <div class="main"><div class="nav"><button class="navtab">Navigátor projektu - Data</button></div>
        <div class="stage"><model-view></model-view><node-dialog></node-dialog></div></div>
      <div class="dock">
        <div class="dhead"><span>2.5 Kombinace zatížení</span><span class="sp"></span>
          <svg width="9" height="9"><path d="M2.500 0V5M6.500 0V5M2 .5H7M5.500 0V5M0 5.500H9M4.500 6V9" stroke="#666" fill="none"/></svg><svg width="9" height="9"><path d="M1 1L8 8M8 1L1 8" stroke="#666" stroke-width="1.500"/></svg></div>
        <tool-group items="gTri gPlus* gDown gRed gWave | gLeft gRight | curlA* curlB* cycle | cPlus cTimes cColon | cClear | rowDel rowIn rowOut | tblY tblB tblE | handTable | glasses2 | excel | calc | ab fx fxx"></tool-group>
        <div class="sheet">
          <div class="tblrow"><load-table></load-table><div class="vs"><span class="sb">${this.arrow("M1 7L5 3L9 7")}</span><span class="vthumb"></span><span class="sb">${this.arrow("M1 3L5 7L9 3")}</span></div></div>
          <div class="hs"><span class="sb">${this.arrow("M7 1L3 5L7 9")}</span><span class="hthumb"></span><span class="sp"></span><span class="sb">${this.arrow("M3 1L7 5L3 9")}</span></div>
        </div>
        <div class="tabs">${tabs.map((t, i) => html`<button class=${classMap({ st: true, on: i === 4 })}>${t}</button>`)}</div>
        <div class="below"></div>
      </div>
      <footer class="status"><span class="hot">Hotovo</span>${["UCHOP", "RASTR", "KARTEZ", "OUCHOP", "VLINIE", "DXF"].map((f) => html`<button class="flag">${f}</button>`)}<span class="sp"></span>
        <span class="cells"><i class="cell first"></i><i class="cell"></i><i class="cell"></i><i class="cell"></i></span>
        <svg class="rs" width="12" height="12"><path d="M8 3h2M5 6h2M8 6h2M2 9h2M5 9h2M8 9h2" stroke="#666c78" stroke-width="2"/></svg></footer>`;
  }
}
